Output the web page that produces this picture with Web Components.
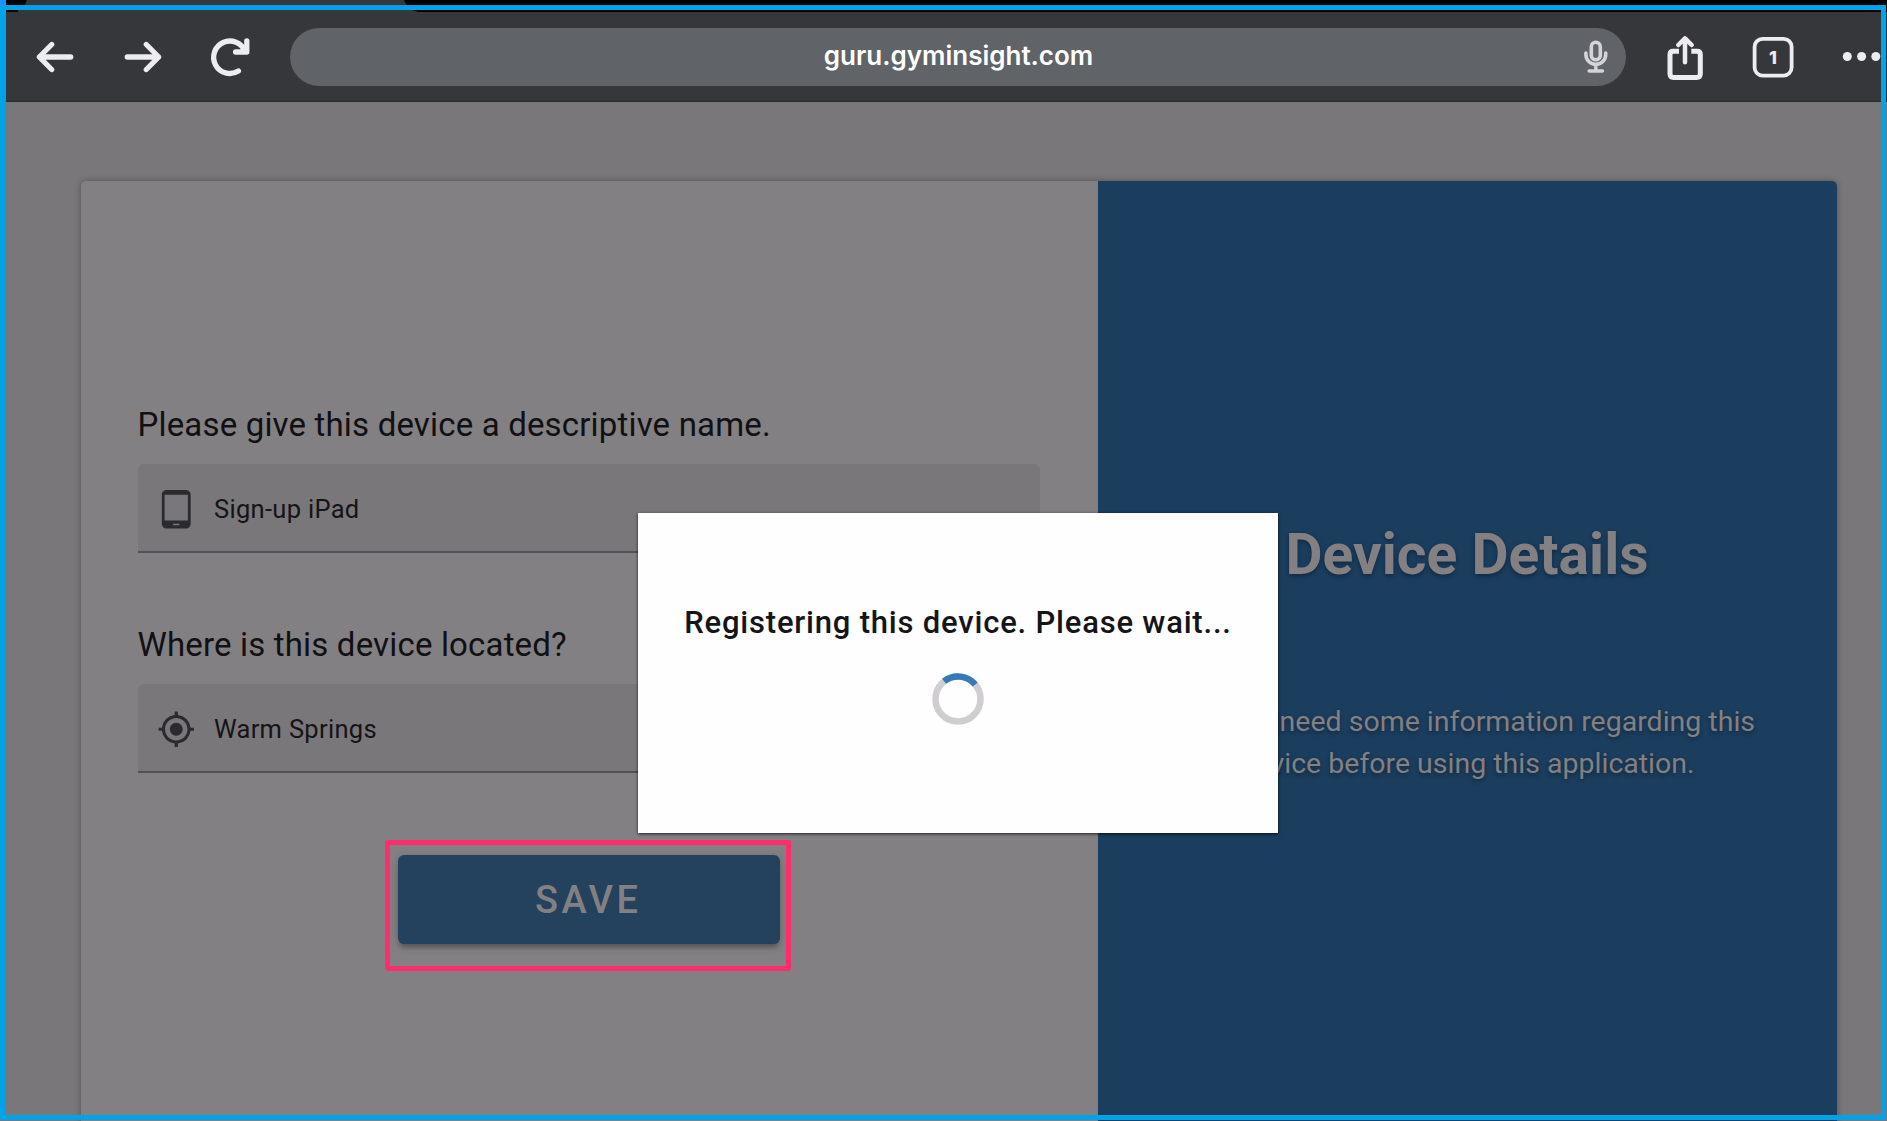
<!DOCTYPE html>
<html lang="en">
<head>
<meta charset="utf-8">
<title>Device Details</title>
<style>
  html, body {
    margin: 0;
    height: 100%;
    overflow: hidden;
    background: #7a777a;
  }
</style>
</head>
<body>
<gym-app></gym-app>

<script>
const define = (name, html) => {
  const template = document.createElement('template');
  template.innerHTML = html;
  customElements.define(name, class extends HTMLElement {
    constructor() {
      super();
      this.attachShadow({ mode: 'open' });
      this.shadowRoot.appendChild(template.content.cloneNode(true));
    }
  });
};

const icons = {
  back: '<path d="M39.7 24H8.5M20.7 11.5 8.3 24l12.4 12.500"/>',
  forward: '<path d="M8.3 24h31.200M27.300 11.500 39.700 24 27.300 36.500"/>',
  reload: '<path d="M40.800 7.800v11.200H29.600M39 18.500A16.200 16.200 0 1 0 32.400 38"/>',
  share: '<path stroke-width="5" stroke-linecap="butt" d="M18 18.200H12.200q-3.200 0-3.200 3.200v19.400q0 3.700 3.700 3.700h22.900q3.700 0 3.700-3.700V21.400q0-3.200-3.200-3.200h-5.800"/><path stroke-width="4.500" d="M24 29.300V6.200M17.300 12l6.700-6.700L30.700 12"/>',
  tabs: '<rect x="5.600" y="5.800" width="37" height="36.800" rx="8" stroke-width="3.800"/>',
  dots: '<g stroke="none" fill="#ececf1"><circle cx="10.300" cy="23.500" r="4.500"/><circle cx="24.600" cy="23.500" r="4.500"/><circle cx="38.800" cy="23.500" r="4.500"/></g>',
  mic: '<g stroke="#d3d4d9" stroke-width="3.600"><rect x="19.300" y="9.200" width="9" height="17.600" rx="4.500"/><path d="M13.900 20v1.500a9.900 9.900 0 0 0 19.800 0V20M23.800 31.500V38M17.200 38h13.200"/></g>',
  tablet: '<path d="M18 0H6C4.340 0 3 1.340 3 3v18c0 1.660 1.340 3 3 3h12c1.660 0 3-1.340 3-3V3c0-1.660-1.340-3-3-3zm-4 22h-4v-1h4v1zm5.250-3H4.750V3h14.500v16z"/>',
  location: '<path d="M12 8c-2.210 0-4 1.790-4 4s1.790 4 4 4 4-1.790 4-4-1.790-4-4-4zm8.940 3A8.994 8.994 0 0 0 13 3.060V1h-2v2.060A8.994 8.994 0 0 0 3.060 11H1v2h2.060A8.994 8.994 0 0 0 11 20.940V23h2v-2.060A8.994 8.994 0 0 0 20.940 13H23v-2h-2.060zM12 19c-3.870 0-7-3.130-7-7s3.130-7 7-7 7 3.130 7 7-3.130 7-7 7z"/>'
};

class BarIcon extends HTMLElement {
  connectedCallback() {
    this.attachShadow({ mode: 'open' }).innerHTML = `
      <style>
        :host { display: block; width: 48px; height: 48px; flex: none; }
        svg { display: block; }
      </style>
      <svg width="48" height="48" viewBox="0 0 48 48" fill="none" stroke="#ececf1"
        stroke-width="5.3" stroke-linecap="round" stroke-linejoin="round">${icons[this.getAttribute('name')]}</svg>
    `;
  }
}
customElements.define('bar-icon', BarIcon);

class FormField extends HTMLElement {
  connectedCallback() {
    this.attachShadow({ mode: 'open' }).innerHTML = `
      <style>
        :host { display: block; }
        .label {
          font-size: 33px;
          line-height: 40px;
          letter-spacing: 0.17px;
          white-space: nowrap;
          color: #111013;
        }
        .box {
          box-sizing: border-box;
          display: flex;
          align-items: center;
          height: 89px;
          margin-top: 19px;
          padding: 2px 0 0 19px;
          border-bottom: 2px solid #535155;
          border-radius: 6px 6px 0 0;
          background: #7a777a;
          font-size: 25.500px;
          letter-spacing: 0.3px;
          color: #151417;
        }
        svg { margin: 2px 19px 0 0; fill: #2b2a2e; }
      </style>
      <div class="label">${this.getAttribute('label')}</div>
      <div class="box">
        <svg width="38.500" height="38.500" viewBox="0 0 24 24">${icons[this.getAttribute('icon')]}</svg>
        <span><slot></slot></span>
      </div>
    `;
  }
}
customElements.define('form-field', FormField);

define('browser-bar', `
  <style>
    :host { display: block; flex: none; height: 102px; background: #000; }
    .strip { height: 12px; padding-left: 18px; }
    .strip svg { display: block; }
    .bar {
      box-sizing: border-box;
      display: flex;
      align-items: center;
      height: 90px;
      padding-left: 31px;
      background: #36373b;
      border-bottom: 1px solid #2b2b2e;
    }
    .reload { margin: 0 36px 0 39px; }
    .forward { margin-left: 40px; }
    .url {
      box-sizing: border-box;
      position: relative;
      display: flex;
      align-items: center;
      justify-content: center;
      width: 1336px;
      height: 58px;
      border-radius: 29px;
      background: #606368;
      color: #fff;
      font: 600 26px/40px Inter, sans-serif;
      margin-right: 35px;
    }
    .url span { padding: 0 0 2px 1px; }
    .url bar-icon { position: absolute; right: 6px; top: 5px; }
    .tabs { position: relative; margin: 0 40px; }
    .tabs b {
      position: absolute;
      inset: 0;
      font: 800 18px/49px Inter, sans-serif;
      text-align: center;
      color: #ececf1;
    }
  </style>
  <div class="strip">
    <svg width="400" height="12"><path fill="#38373b" d="M9 0h377c3 7 8 11 15 12H-8C1 11 7 7 9 0z"/></svg>
  </div>
  <div class="bar">
    <bar-icon name="back"></bar-icon>
    <bar-icon class="forward" name="forward"></bar-icon>
    <bar-icon class="reload" name="reload"></bar-icon>
    <div class="url"><span><slot></slot></span><bar-icon name="mic"></bar-icon></div>
    <bar-icon name="share"></bar-icon>
    <div class="tabs"><bar-icon name="tabs"></bar-icon><b>1</b></div>
    <bar-icon name="dots"></bar-icon>
  </div>
`);

define('save-button', `
  <style>
    :host { display: block; position: relative; width: 382px; height: 89px; }
    button {
      width: 100%;
      height: 100%;
      padding: 0 1px 0 0;
      border: 0;
      border-radius: 6px;
      background: #24425e;
      box-shadow: 0 5px 4px -2px rgba(0,0,0,.2), 0 3px 8px rgba(0,0,0,.22);
      color: #838083;
      font: 500 38px/88px Roboto, sans-serif;
      letter-spacing: 3.4px;
    }
    /* highlight drawn around the button */
    .mark {
      position: absolute;
      left: -12.500px;
      top: -15.500px;
      width: 396px;
      height: 121px;
      border: 5.500px solid #ff2d6e;
      border-radius: 3px;
    }
  </style>
  <button><slot></slot></button>
  <div class="mark"></div>
`);

define('device-card', `
  <style>
    :host {
      display: flex;
      width: 1756px;
      height: 1000px;
      margin: 78.500px 0 0 80.500px;
      border-radius: 5px;
      overflow: hidden;
      background: #838083;
      box-shadow: 0 0 6px rgba(0,0,0,.32);
    }
    .form {
      box-sizing: border-box;
      width: 1017px;
      padding: 224.500px 57.500px 0 57px;
    }
    form-field + form-field { margin-top: 72px; }
    save-button { margin: 82px auto 0; }
    .info {
      flex: 1;
      background: #1b3d5e;
      color: #838083;
      text-align: center;
      text-shadow: 0 2px 4px rgba(0,0,0,.35);
    }
    h1 {
      margin: 339px 0 0;
      font-size: 57px;
      line-height: 70px;
      white-space: nowrap;
    }
    p {
      margin: 111.500px 0 0;
      font-size: 28.500px;
      line-height: 41.700px;
      white-space: nowrap;
    }
  </style>
  <div class="form">
    <form-field label="Please give this device a descriptive name." icon="tablet">Sign-up iPad</form-field>
    <form-field label="Where is this device located?" icon="location">Warm Springs</form-field>
    <save-button>SAVE</save-button>
  </div>
  <div class="info">
    <h1>Device Details</h1>
    <p>We just need some information regarding this<br>device before using this application.</p>
  </div>
`);

define('wait-dialog', `
  <style>
    :host {
      box-sizing: border-box;
      position: absolute;
      left: 638px;
      top: 513px;
      width: 640px;
      height: 320px;
      padding-top: 90px;
      background: #fefefe;
      box-shadow: 0 1px 3px rgba(0,0,0,.75);
      text-align: center;
      font-size: 31px;
      font-weight: 500;
      line-height: 40px;
      letter-spacing: 0.8px;
      white-space: nowrap;
      color: #151518;
    }
    svg { display: block; margin: 29.500px auto 0; }
  </style>
  <slot></slot>
  <svg width="52" height="52" viewBox="-26 -26 52 52" fill="none" stroke-width="6.500">
    <circle r="22.500" stroke="#cfcdd0"/>
    <path stroke="#3579b8" d="M-13.900-17.700A22.500 22.500 0 0 1 17.200-14.500"/>
  </svg>
`);

define('gym-app', `
  <style>
    :host {
      position: relative;
      display: flex;
      flex-direction: column;
      width: 1887px;
      height: 1121px;
      overflow: hidden;
      background: #7a777a;
      font-family: Roboto, sans-serif;
    }
    device-card { flex: none; }
    .frame {
      position: absolute;
      inset: 5px 1px 1px 0;
      border: 5px solid #00a2e8;
      border-left-width: 6px;
    }
    .corner {
      position: absolute;
      left: 0;
      top: 0;
      width: 6px;
      height: 5px;
      background: #1e90ff;
    }
  </style>
  <browser-bar>guru.gyminsight.com</browser-bar>
  <device-card></device-card>
  <wait-dialog>Registering this device. Please wait...</wait-dialog>
  <div class="corner"></div>
  <div class="frame"></div>
`);
</script>
</body>
</html>
